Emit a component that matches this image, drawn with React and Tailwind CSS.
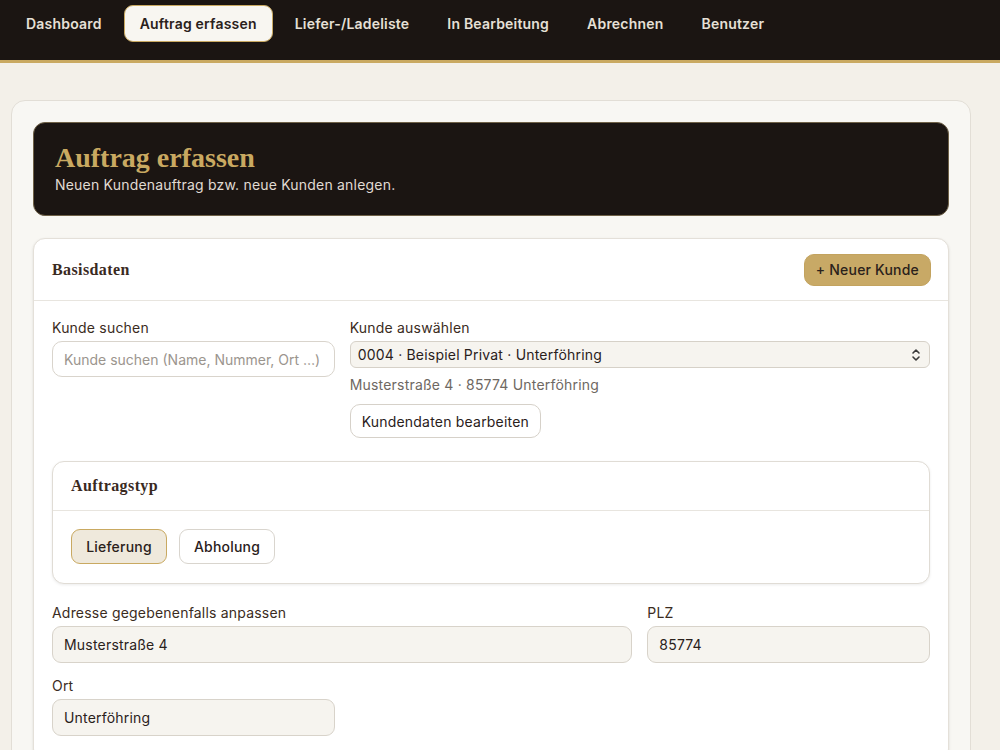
import React, { useState } from 'react';

const navItems = ['Dashboard', 'Auftrag erfassen', 'Liefer-/Ladeliste', 'In Bearbeitung', 'Abrechnen', 'Benutzer'];

const Navigation = ({ aktiv }) => (
  <nav className="h-[63px] bg-[#1b1512] border-b-[3px] border-[#c9a961]">
    <div className="flex items-center gap-[6px] pl-[10px] pt-[5px]">
      {navItems.map((item) =>
        item === aktiv ? (
          <span
            key={item}
            className="h-[37px] flex items-center px-[15px] rounded-[9px] bg-[#f8f6f1] border-[1.5px] border-[#c9a961] text-[#2a211b] text-[14px] font-semibold"
          >
            {item}
          </span>
        ) : (
          <span key={item} className="h-[37px] flex items-center px-4 text-[#e6e0d6] text-[14px] font-semibold">
            {item}
          </span>
        )
      )}
    </div>
  </nav>
);

const Label = ({ children }) => (
  <label className="block text-[14px] leading-5 text-[#3b2c22] mb-[3px]">{children}</label>
);

const Feld = ({ value, className = '' }) => (
  <div
    className={`h-[37px] flex items-center px-[11px] rounded-[9px] bg-[#f6f4ef] border border-[#d8d3ca] text-[14px] text-[#2a211b] ${className}`}
  >
    {value}
  </div>
);

const App = () => {
  const [suche, setSuche] = useState('');
  const [typ, setTyp] = useState('Lieferung');

  return (
    <div className="min-h-[750px] bg-[#f3f0e9] font-['Inter','Liberation_Sans',sans-serif] tracking-[0.2px]">
      <Navigation aktiv="Auftrag erfassen" />

      <main className="pt-[37px] pl-[11px]">
        <div className="w-[960px] rounded-[14px] border border-[#e2ded6] bg-[#f8f7f3] px-[21px] pt-[21px] pb-6">
          {/* Kopfbereich */}
          <div className="rounded-[12px] bg-[#1b1512] border border-[#6f6147] px-[21px] pt-[19px] pb-[20px]">
            <h1 className="font-['Liberation_Serif','DejaVu_Serif',serif] font-bold text-[28px] leading-[32px] tracking-normal text-[#c9a961]">
              Auftrag erfassen
            </h1>
            <p className="mt-[1px] text-[14px] leading-5 text-[#e0dbd2]">
              Neuen Kundenauftrag bzw. neue Kunden anlegen.
            </p>
          </div>

          {/* Basisdaten */}
          <section className="mt-[22px] rounded-[12px] bg-white border border-[#e4e0d9] shadow-sm">
            <div className="h-[62px] flex items-center justify-between pl-[18px] pr-[17px] border-b border-[#e8e5df]">
              <h2 className="font-['Liberation_Serif','DejaVu_Serif',serif] font-bold text-[16px] tracking-[0.4px] text-[#3a2a1f]">
                Basisdaten
              </h2>
              <button className="h-[32px] px-[11px] rounded-[10px] bg-[#c8a966] border border-[#c3a35f] text-[14px] font-medium text-[#2a211b]">
                + Neuer Kunde
              </button>
            </div>

            <div className="px-[18px] pt-[17px] pb-6">
              <div className="grid grid-cols-3 gap-x-[15px]">
                <div>
                  <Label>Kunde suchen</Label>
                  <input
                    type="text"
                    value={suche}
                    onChange={(e) => setSuche(e.target.value)}
                    placeholder="Kunde suchen (Name, Nummer, Ort …)"
                    className="w-full h-[36px] px-[11px] rounded-[10px] border border-[#d9d4cc] bg-white text-[14px] tracking-normal text-[#2a211b] placeholder:text-[#9b958e] focus:outline-none"
                  />
                </div>
                <div className="col-span-2">
                  <Label>Kunde auswählen</Label>
                  <div className="h-[27px] flex items-center justify-between pl-[7px] pr-[8px] rounded-[6px] bg-[#f6f4ef] border border-[#d6d1c8] text-[14px] text-[#2a211b]">
                    <span>0004 · Beispiel Privat · Unterföhring</span>
                    <svg width="10" height="14" viewBox="0 0 10 14" fill="none" stroke="#3a3a3a" strokeWidth="1.6" strokeLinecap="round" strokeLinejoin="round">
                      <path d="M2 5 L5 2 L8 5" />
                      <path d="M2 9 L5 12 L8 9" />
                    </svg>
                  </div>
                  <p className="mt-[7px] text-[14px] leading-5 text-[#6e6862]">Musterstraße 4 · 85774 Unterföhring</p>
                  <button className="mt-[9px] h-[34px] px-[11px] rounded-[10px] border border-[#d6d1c9] bg-white text-[14px] text-[#2a211b]">
                    Kundendaten bearbeiten
                  </button>
                </div>
              </div>

              {/* Auftragstyp */}
              <div className="mt-[23px] rounded-[12px] border border-[#e0dcd5] bg-white shadow-[0_1px_3px_rgba(0,0,0,0.08)]">
                <div className="h-[49px] flex items-center px-[18px] border-b border-[#e8e5df]">
                  <h3 className="font-['Liberation_Serif','DejaVu_Serif',serif] font-bold text-[16px] tracking-[0.4px] text-[#3a2a1f]">
                    Auftragstyp
                  </h3>
                </div>
                <div className="flex gap-[12px] px-[18px] pt-[18px] pb-[19px]">
                  {['Lieferung', 'Abholung'].map((t) => (
                    <button
                      key={t}
                      onClick={() => setTyp(t)}
                      className={
                        t === typ
                          ? 'h-[35px] w-[96px] rounded-[9px] border border-[#c9a961] bg-[#efe9dc] text-[14px] font-medium text-[#2a211b]'
                          : 'h-[35px] w-[96px] rounded-[9px] border border-[#d9d5ce] bg-white text-[14px] font-medium text-[#2a211b]'
                      }
                    >
                      {t}
                    </button>
                  ))}
                </div>
              </div>

              {/* Adresse */}
              <div className="mt-[19px] grid grid-cols-3 gap-x-[15px] gap-y-[13px]">
                <div className="col-span-2">
                  <Label>Adresse gegebenenfalls anpassen</Label>
                  <Feld value="Musterstraße 4" />
                </div>
                <div>
                  <Label>PLZ</Label>
                  <Feld value="85774" />
                </div>
                <div>
                  <Label>Ort</Label>
                  <Feld value="Unterföhring" />
                </div>
              </div>
            </div>
          </section>
        </div>
      </main>
    </div>
  );
};

export default App;
